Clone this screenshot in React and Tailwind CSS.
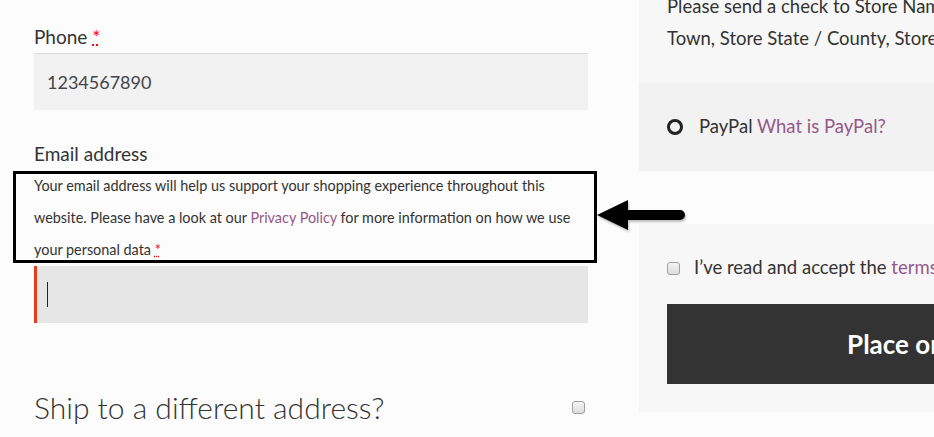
import React from "react";

const Req = () => (
    <abbr title="required" className="text-[#ff0000] underline decoration-dotted">
        *
    </abbr>
);

const FakeCheckbox = ({ className = "" }) => (
    <span
        className={`inline-block w-[13px] h-[13px] rounded-[3px] border border-[#a0a0a0] bg-gradient-to-b from-[#f4f4f4] to-[#dcdcdc] shrink-0 ${className}`}
    />
);

const Arrow = () => (
    <svg
        className="absolute left-[594px] top-[196px] drop-shadow-[1px_2px_1px_rgba(0,0,0,0.25)]"
        width="92"
        height="40"
        viewBox="0 0 92 40"
    >
        <path d="M3 19 L34 4 L34 14 L86 14 A5 5 0 0 1 86 24 L34 24 L34 34 Z" fill="#000" />
    </svg>
);

const App = () => {
    return (
        <div className="relative w-[934px] h-[437px] overflow-hidden bg-[#fcfcfc] flex font-['Lato',sans-serif] text-[#333]">
            {/* billing fields */}
            <div className="w-[554px] ml-[34px] shrink-0 flex flex-col pt-[24px]">
                <label className="text-[19px] leading-[26px]">
                    Phone <Req />
                </label>
                <div className="mt-[3px] h-[57px] bg-[#f2f2f2] border-t border-[#dcdcdc] flex items-center pl-[13px] text-[18px] text-[#43454b]">
                    1234567890
                </div>

                <label className="mt-[31px] text-[19px] leading-[26px]">Email address</label>
                <div className="relative mt-[3px]">
                    <p className="text-[14.4px] leading-[32px]">
                        Your email address will help us support your shopping experience throughout this website. Please
                        have a look at our <span className="text-[#96588a]">Privacy Policy</span> for more information on
                        how we use your personal data <Req />
                    </p>
                    <div className="absolute -left-[21px] -right-[9px] top-[1px] bottom-[3px] border-[3px] border-black" />
                </div>
                <div className="h-[57px] bg-[#e6e6e6] border-l-[3px] border-[#e2401c] flex items-center pl-[10px]">
                    <span className="w-px h-[25px] bg-[#222]" />
                </div>

                <div className="mt-[64px] flex items-center justify-between">
                    <h3 className="text-[30px] leading-[40px] font-light">Ship to a different address?</h3>
                    <FakeCheckbox className="mr-[3px]" />
                </div>
            </div>

            {/* payment */}
            <div className="ml-[51px] w-[547px] shrink-0 -mt-[10px] flex flex-col text-[18.5px]">
                <div className="bg-[#f7f7f7] px-[28px] pb-[29px] leading-[32px]">
                    <p>
                        Please send a check to Store Name, Store Street, Store
                        <br />
                        Town, Store State / County, Store Postcode.
                    </p>
                </div>
                <div className="h-[88px] bg-[#f2f2f2] px-[28px] flex items-center">
                    <span className="w-4 h-4 rounded-full border-[3px] border-[#222]" />
                    <span className="ml-[16px]">
                        PayPal <span className="text-[#96588a]">What is PayPal?</span>
                    </span>
                </div>

                <div className="mt-[53px] bg-[#f7f7f7] p-[28px]">
                    <div className="h-[32px] flex items-center">
                        <FakeCheckbox />
                        <span className="ml-[14px]">
                            I’ve read and accept the <span className="text-[#96588a]">terms &amp; conditions</span> <Req />
                        </span>
                    </div>
                    <button className="mt-[20px] h-[80px] w-full bg-[#333333] text-white font-bold text-[26px]">
                        Place order
                    </button>
                </div>
            </div>

            <Arrow />
        </div>
    );
};

export default App;
